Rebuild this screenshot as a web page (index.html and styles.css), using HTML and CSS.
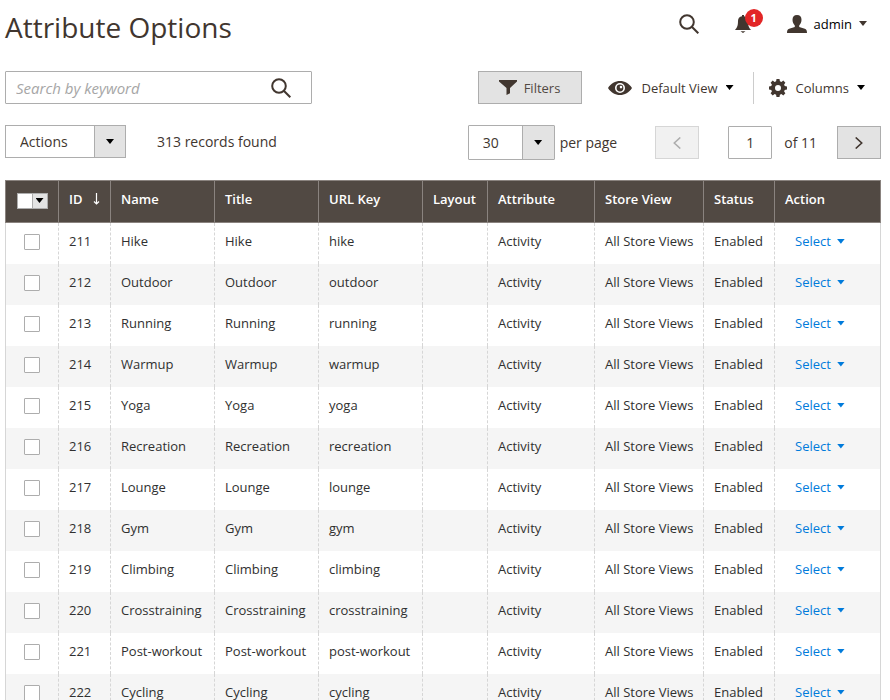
FILE: index.html
```html
<!DOCTYPE html>
<html lang="en">
<head>
<meta charset="utf-8">
<meta name="viewport" content="width=device-width, initial-scale=1">
<title>Attribute Options</title>
<link rel="stylesheet" href="styles.css">
</head>
<body>
<header class="page-header">
  <h1 class="page-title">Attribute Options</h1>
  <div class="header-tools">
    <button class="plain" type="button" aria-label="Search"><svg class="icon-search" viewBox="0 0 20 20"><circle cx="8" cy="8" r="6.8"/><path d="M12.8 12.8 19.300 19.300"/></svg></button>
    <button class="plain notifications" type="button" aria-label="Notifications"><svg class="icon-bell" viewBox="0 0 16 18"><path d="M7 0h2v1.3c2.600.5 4 2.200 4 4.700 0 4.500.8 6.500 3 9H0c2.200-2.500 3-4.500 3-9C3 3.500 4.400 1.800 7 1.300zM5.500 16.200h5L8 18z"/></svg><span class="badge">1</span></button>
    <button class="plain account" type="button"><svg class="icon-user" viewBox="0 0 20 18"><path d="M10 0c3 0 4.500 1.900 4.500 4.800 0 2.400-1 4.300-2.300 5.600v1.600l5.600 1.800c1.500.5 2.200 1.300 2.200 4.200H0c0-2.900.7-3.700 2.200-4.200L7.800 12v-1.600C6.500 9.100 5.500 7.200 5.500 4.800 5.500 1.900 7 0 10 0z"/></svg><span class="account-name">admin</span><span class="caret caret-soft"></span></button>
  </div>
</header>

<main class="content">
  <div class="toolbar toolbar-top">
    <form class="search-box" role="search">
      <input class="search-input" type="text" placeholder="Search by keyword" aria-label="Search by keyword">
      <button class="plain search-submit" type="button" aria-label="Search"><svg class="icon-search" viewBox="0 0 20 20"><circle cx="8" cy="8" r="6.800"/><path d="M12.800 12.800 19.300 19.300"/></svg></button>
    </form>
    <div class="view-tools">
      <button class="btn-filters" type="button"><svg class="icon-filter" viewBox="0 0 18 15"><path d="M0 0h18v1.500l-7 6.500v5.300L7.500 15V8L0 1.500z"/></svg>Filters</button>
      <button class="plain view-switch" type="button"><svg class="icon-eye" viewBox="0 0 24 14"><path fill-rule="evenodd" d="M0 7C3 2.300 7.200 0 12 0s9 2.300 12 7c-3 4.700-7.200 7-12 7S3 11.700 0 7zm12-5a5 5 0 1 0 0 10 5 5 0 0 0 0-10z"/><path fill-rule="evenodd" d="M12 3.600a3.400 3.400 0 1 0 0 6.800 3.400 3.400 0 0 0 0-6.800zm1 1.200a1.300 1.300 0 1 1 0 2.600 1.300 1.300 0 0 1 0-2.600z"/></svg>Default View<span class="caret"></span></button>
      <button class="plain columns-switch" type="button"><svg class="icon-gear" viewBox="0 0 18 18"><path fill-rule="evenodd" d="M7.500 0h3l.4 2.300 1.500.6 1.900-1.300 2.100 2.100-1.300 1.900.6 1.500 2.300.4v3l-2.300.4-.6 1.500 1.300 1.900-2.100 2.100-1.900-1.300-1.500.6-.4 2.300h-3l-.4-2.300-1.500-.6-1.900 1.300-2.100-2.100 1.300-1.900-.6-1.500L0 10.500v-3l2.300-.4.6-1.500-1.300-1.900 2.100-2.100 1.900 1.300 1.500-.6zM9 6a3 3 0 1 0 0 6 3 3 0 0 0 0-6z"/></svg>Columns<span class="caret"></span></button>
    </div>
  </div>

  <div class="toolbar toolbar-bottom">
    <div class="mass-actions">
      <div class="select-box select-actions">
        <select aria-label="Actions"><option>Actions</option></select>
        <span class="select-arrow"><span class="caret"></span></span>
      </div>
      <span>313 records found</span>
    </div>
    <div class="pager">
      <div class="select-box select-size">
        <select id="page-size"><option>30</option></select>
        <span class="select-arrow"><span class="caret"></span></span>
      </div>
      <label class="size-label" for="page-size">per page</label>
      <button class="btn-page" type="button" aria-label="Previous page" disabled><svg class="icon-chevron" viewBox="0 0 8 12"><path d="M7.300.5 1.300 6l6 5.500"/></svg></button>
      <input class="page-input" id="page-number" type="text" value="1" aria-label="Page number">
      <label class="page-total" for="page-number">of 11</label>
      <button class="btn-page" type="button" aria-label="Next page"><svg class="icon-chevron" viewBox="0 0 8 12"><path d="M.7.5l6 5.500-6 5.500"/></svg></button>
    </div>
  </div>

  <table class="grid">
    <colgroup><col class="col-check"><col class="col-id"><col class="col-name"><col class="col-name"><col class="col-name"><col class="col-layout"><col class="col-attribute"><col class="col-store"><col class="col-status"><col></colgroup>
    <thead>
      <tr>
        <th class="check-cell"><span class="multicheck"><input type="checkbox" aria-label="Select all"><button type="button" aria-label="Selection options"><span class="caret"></span></button></span></th>
        <th><span class="sorted">ID<svg class="icon-sort" viewBox="0 0 7 12"><path d="M3.500 0v11M1 8.500 3.500 11 6 8.500"/></svg></span></th><th>Name</th><th>Title</th><th>URL Key</th><th>Layout</th><th>Attribute</th><th>Store View</th><th>Status</th><th>Action</th>
      </tr>
    </thead>
    <tbody>
      <tr><td class="check-cell"><input class="check" type="checkbox" aria-label="Select 211"></td><td>211</td><td>Hike</td><td>Hike</td><td>hike</td><td></td><td>Activity</td><td>All Store Views</td><td>Enabled</td><td><button class="plain row-action" type="button">Select<span class="caret"></span></button></td></tr>
      <tr><td class="check-cell"><input class="check" type="checkbox" aria-label="Select 212"></td><td>212</td><td>Outdoor</td><td>Outdoor</td><td>outdoor</td><td></td><td>Activity</td><td>All Store Views</td><td>Enabled</td><td><button class="plain row-action" type="button">Select<span class="caret"></span></button></td></tr>
      <tr><td class="check-cell"><input class="check" type="checkbox" aria-label="Select 213"></td><td>213</td><td>Running</td><td>Running</td><td>running</td><td></td><td>Activity</td><td>All Store Views</td><td>Enabled</td><td><button class="plain row-action" type="button">Select<span class="caret"></span></button></td></tr>
      <tr><td class="check-cell"><input class="check" type="checkbox" aria-label="Select 214"></td><td>214</td><td>Warmup</td><td>Warmup</td><td>warmup</td><td></td><td>Activity</td><td>All Store Views</td><td>Enabled</td><td><button class="plain row-action" type="button">Select<span class="caret"></span></button></td></tr>
      <tr><td class="check-cell"><input class="check" type="checkbox" aria-label="Select 215"></td><td>215</td><td>Yoga</td><td>Yoga</td><td>yoga</td><td></td><td>Activity</td><td>All Store Views</td><td>Enabled</td><td><button class="plain row-action" type="button">Select<span class="caret"></span></button></td></tr>
      <tr><td class="check-cell"><input class="check" type="checkbox" aria-label="Select 216"></td><td>216</td><td>Recreation</td><td>Recreation</td><td>recreation</td><td></td><td>Activity</td><td>All Store Views</td><td>Enabled</td><td><button class="plain row-action" type="button">Select<span class="caret"></span></button></td></tr>
      <tr><td class="check-cell"><input class="check" type="checkbox" aria-label="Select 217"></td><td>217</td><td>Lounge</td><td>Lounge</td><td>lounge</td><td></td><td>Activity</td><td>All Store Views</td><td>Enabled</td><td><button class="plain row-action" type="button">Select<span class="caret"></span></button></td></tr>
      <tr><td class="check-cell"><input class="check" type="checkbox" aria-label="Select 218"></td><td>218</td><td>Gym</td><td>Gym</td><td>gym</td><td></td><td>Activity</td><td>All Store Views</td><td>Enabled</td><td><button class="plain row-action" type="button">Select<span class="caret"></span></button></td></tr>
      <tr><td class="check-cell"><input class="check" type="checkbox" aria-label="Select 219"></td><td>219</td><td>Climbing</td><td>Climbing</td><td>climbing</td><td></td><td>Activity</td><td>All Store Views</td><td>Enabled</td><td><button class="plain row-action" type="button">Select<span class="caret"></span></button></td></tr>
      <tr><td class="check-cell"><input class="check" type="checkbox" aria-label="Select 220"></td><td>220</td><td>Crosstraining</td><td>Crosstraining</td><td>crosstraining</td><td></td><td>Activity</td><td>All Store Views</td><td>Enabled</td><td><button class="plain row-action" type="button">Select<span class="caret"></span></button></td></tr>
      <tr><td class="check-cell"><input class="check" type="checkbox" aria-label="Select 221"></td><td>221</td><td>Post-workout</td><td>Post-workout</td><td>post-workout</td><td></td><td>Activity</td><td>All Store Views</td><td>Enabled</td><td><button class="plain row-action" type="button">Select<span class="caret"></span></button></td></tr>
      <tr><td class="check-cell"><input class="check" type="checkbox" aria-label="Select 222"></td><td>222</td><td>Cycling</td><td>Cycling</td><td>cycling</td><td></td><td>Activity</td><td>All Store Views</td><td>Enabled</td><td><button class="plain row-action" type="button">Select<span class="caret"></span></button></td></tr>
    </tbody>
  </table>
</main>
</body>
</html>
```
FILE: styles.css
```css
* {
  box-sizing: border-box;
}

body {
  margin: 0;
  padding: 0 9px 0 5px;
  background: #fff;
  color: #41362f;
  font: 14px/20px "Open Sans", sans-serif;
}

button,
input,
select {
  margin: 0;
  border-radius: 0;
  color: inherit;
  font: inherit;
}

svg {
  display: block;
  flex: none;
  fill: #41362f;
}

.plain {
  display: flex;
  align-items: center;
  padding: 0;
  border: 0;
  background: none;
}

.caret {
  flex: none;
  width: 8px;
  height: 5px;
  background: #000;
  clip-path: polygon(0 0, 100% 0, 50% 100%);
}

.caret-soft {
  background: #41362f;
}

/* Header */

.page-header {
  display: flex;
  justify-content: space-between;
  align-items: flex-start;
}

.page-title {
  margin: 0;
  padding: 7px 0 24px;
  font-size: 28px;
  font-weight: 400;
  line-height: 40px;
}

.header-tools {
  display: flex;
  align-items: center;
  gap: 36px;
  height: 44px;
  padding: 3px 14px 0 0;
}

.icon-search {
  width: 20px;
  height: 20px;
  fill: none;
  stroke: #41362f;
  stroke-width: 2;
}

.notifications {
  position: relative;
}

.icon-bell {
  width: 16px;
  height: 18px;
}

.badge {
  position: absolute;
  top: -6px;
  left: 10px;
  width: 18px;
  height: 18px;
  border-radius: 50%;
  background: #e22626;
  color: #fff;
  font-size: 11px;
  font-weight: 700;
  line-height: 18px;
  text-align: center;
}

.account {
  color: #000;
  font-size: 13px;
}

.icon-user {
  width: 20px;
  height: 18px;
}

.account-name {
  margin: 0 7px;
}

/* Toolbars */

.toolbar {
  display: flex;
  justify-content: space-between;
  align-items: flex-start;
}

.toolbar-bottom {
  padding: 21px 0 20px;
}

.search-box {
  display: flex;
  width: 35%;
  height: 33px;
  padding-right: 20px;
  border: 1px solid #adadad;
  border-radius: 1px;
}

.search-input {
  flex: 1;
  min-width: 0;
  padding: 0 10px;
  border: 0;
  background: none;
  font-size: 15px;
}

.search-input::placeholder {
  color: #a6a6a6;
  font-style: italic;
}

.view-tools {
  display: flex;
  align-items: center;
  padding-right: 16px;
  font-size: 13px;
}

.btn-filters {
  display: flex;
  align-items: center;
  justify-content: center;
  gap: 7px;
  width: 104px;
  height: 33px;
  padding: 0;
  border: 1px solid #adadad;
  background: #e3e3e3;
  color: #514943;
  font-weight: 500;
}

.icon-filter {
  width: 18px;
  height: 15px;
}

.view-switch {
  height: 32px;
  padding: 0 19px 0 26px;
}

.icon-eye {
  width: 24px;
  height: 14px;
  margin-right: 10px;
}

.view-switch .caret,
.columns-switch .caret {
  margin-left: 8px;
}

.columns-switch {
  height: 32px;
  padding-left: 15px;
  border-left: 1px solid #ccc;
}

.icon-gear {
  width: 18px;
  height: 18px;
  margin-right: 9px;
}

.mass-actions {
  display: flex;
  align-items: center;
  gap: 31px;
}

.select-box {
  display: grid;
  grid-template-columns: 1fr 32px;
  border: 1px solid #adadad;
}

.select-box select {
  grid-area: 1 / 1 / 2 / 3;
  width: 100%;
  padding: 0 14px;
  border: 0;
  appearance: none;
  background: none;
}

.select-arrow {
  display: flex;
  grid-area: 1 / 2;
  align-items: center;
  justify-content: center;
  border-left: 1px solid #adadad;
  background: #e3e3e3;
  pointer-events: none;
}

.select-actions {
  grid-template-columns: 1fr 31px;
  width: 121px;
  height: 33px;
}

.select-size {
  width: 87px;
  height: 35px;
  border-radius: 1px;
}

.pager {
  display: flex;
  align-items: center;
}

.size-label {
  margin: 0 38px 0 5px;
}

.btn-page {
  display: flex;
  align-items: center;
  justify-content: center;
  width: 44px;
  height: 33px;
  padding: 0;
  border: 1px solid #adadad;
  background: #e3e3e3;
}

.btn-page:disabled {
  border-color: #d6d6d6;
  background: #f1f1f1;
}

.icon-chevron {
  width: 8px;
  height: 12px;
  fill: none;
  stroke: #41362f;
  stroke-width: 1.6;
}

.btn-page:disabled .icon-chevron {
  stroke: #adadad;
}

.page-input {
  width: 44px;
  height: 33px;
  margin-left: 29px;
  padding: 0;
  border: 1px solid #adadad;
  border-radius: 1px;
  text-align: center;
}

.page-total {
  margin: 0 20px 0 12px;
}

/* Data grid */

.grid {
  width: 100%;
  border-collapse: collapse;
  table-layout: fixed;
  color: #303030;
  font-size: 13px;
}

.col-check { width: 53px; }
.col-id { width: 52px; }
.col-name { width: 104px; }
.col-layout { width: 65px; }
.col-attribute { width: 107px; }
.col-store { width: 109px; }
.col-status { width: 71px; }

.grid th {
  height: 42px;
  padding: 0 10px 6px;
  border: 1px solid #8a837f;
  background: #514943;
  color: #fff;
  font-weight: 600;
  text-align: left;
  white-space: nowrap;
}

.grid td {
  height: 41px;
  padding: 0 10px 4px;
  border-right: 1px dashed #d6d6d6;
  border-left: 1px dashed #d6d6d6;
  white-space: nowrap;
}

.grid td:first-child {
  border-left-style: solid;
}

.grid td:last-child {
  border-right-style: solid;
}

.grid tbody tr:nth-child(even) {
  background: #f5f5f5;
}

.grid .check-cell {
  padding: 0 0 2px;
  text-align: center;
}

.check {
  display: block;
  width: 16px;
  height: 16px;
  margin: 0 auto;
  border: 1px solid #adadad;
  border-radius: 1px;
  appearance: none;
  background: #fff;
}

.multicheck {
  display: flex;
  width: 31px;
  height: 16px;
  margin: 0 auto;
  border: 1px solid #adadad;
  background: #fff;
}

.multicheck input {
  flex: 1;
  appearance: none;
}

.multicheck button {
  display: flex;
  align-items: center;
  justify-content: center;
  width: 15px;
  padding: 0;
  border: 0;
  border-left: 1px solid #adadad;
  background: #e3e3e3;
}

.sorted {
  display: flex;
  align-items: center;
  gap: 10px;
}

.icon-sort {
  width: 7px;
  height: 12px;
  fill: none;
  stroke: #fff;
  stroke-width: 1.2;
}

.row-action {
  gap: 6px;
  padding-left: 10px;
  color: #007bdb;
}

.row-action .caret {
  background: #007bdb;
}
```
